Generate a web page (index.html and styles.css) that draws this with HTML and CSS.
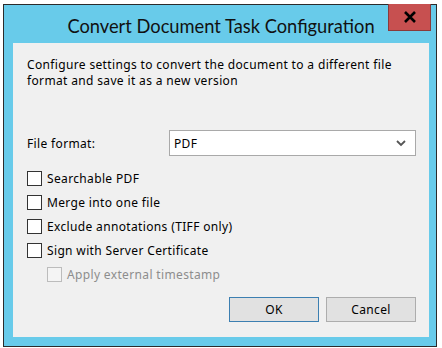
FILE: index.html
```html
<!DOCTYPE html>
<html lang="en">
<head>
  <meta charset="UTF-8" />
  <title>Convert Document Task Configuration</title>
  <link rel="stylesheet" href="styles.css">
</head>
<body>
  <div class="window">
    <div class="titlebar">
      <span class="title">Convert Document Task Configuration</span>
      <button class="close" title="Close">
        <svg width="14" height="12" viewBox="0 0 14 12"><path d="M2 1 L12 11 M12 1 L2 11" stroke="#000" stroke-width="2.6"/></svg>
      </button>
    </div>

    <div class="client">
      <p class="desc">Configure settings to convert the document to a different file<br>format and save it as a new version</p>

      <div class="field">
        <label class="field-label">File format:</label>
        <div class="select">
          <span>PDF</span>
          <svg width="10" height="7" viewBox="0 0 10 7"><path d="M1 1 L5 5 L9 1" fill="none" stroke="#555" stroke-width="1.8"/></svg>
        </div>
      </div>

      <div class="options">
        <label class="check"><input type="checkbox"> Searchable PDF</label>
        <label class="check"><input type="checkbox"> Merge into one file</label>
        <label class="check"><input type="checkbox"> Exclude annotations (TIFF only)</label>
        <label class="check"><input type="checkbox"> Sign with Server Certificate</label>
        <label class="check sub disabled"><input type="checkbox" disabled> Apply external timestamp</label>
      </div>

      <div class="buttons">
        <button class="btn default">OK</button>
        <button class="btn">Cancel</button>
      </div>
    </div>
  </div>
</body>
</html>
```

FILE: styles.css
```css
body {
  margin: 0;
  background: #ffffff;
  font-family: "Noto Sans", "Open Sans", sans-serif;
  font-size: 12px;
  letter-spacing: 0.35px;
  color: #000;
}
.window {
  margin: 4px 0 0 3px;
  border: 1px solid #2b2b2b;
  background: #68cbea;
  display: flex;
  flex-direction: column;
  padding: 0 7px 9px 9px;
  box-sizing: border-box;
  width: 434px;
  height: 343px;
}
.titlebar {
  height: 38px;
  display: flex;
  align-items: center;
  justify-content: center;
  position: relative;
}
.title {
  font-family: Lato, "Noto Sans", sans-serif;
  font-size: 18.3px;
  letter-spacing: 0;
  color: #111;
  margin-top: 4px;
}
.close {
  position: absolute;
  top: -1px;
  right: -2px;
  width: 43px;
  height: 27px;
  background: #c75050;
  border: 1px solid #8a3a3a;
  border-top: none;
  display: flex;
  align-items: center;
  justify-content: center;
  padding: 0;
}
.client {
  flex: 1;
  background: #f0f0f0;
  padding: 14px 13px 0 14px;
}
.desc {
  margin: 0;
  line-height: 16px;
}
.field {
  display: flex;
  align-items: center;
  margin-top: 41px;
}
.field-label {
  width: 142px;
}
.select {
  flex: 1;
  height: 26px;
  box-sizing: border-box;
  border: 1px solid #a9a9a9;
  background: #fff;
  display: flex;
  align-items: center;
  justify-content: space-between;
  padding: 0 9px 0 4px;
}
.options {
  margin-top: 10px;
  display: flex;
  flex-direction: column;
}
.check {
  height: 24px;
  display: flex;
  align-items: center;
  gap: 5px;
}
.check input {
  appearance: none;
  margin: 0;
  width: 15px;
  height: 15px;
  border: 1px solid #333;
  background: #fff;
}
.check.sub {
  padding-left: 20px;
}
.check.disabled {
  color: #8d8d8d;
}
.check.disabled input {
  border-color: #bcbcbc;
  background: #f4f4f4;
}
.buttons {
  display: flex;
  justify-content: flex-end;
  gap: 7px;
  margin-top: 11px;
}
.btn {
  width: 90px;
  height: 25px;
  font-family: inherit;
  font-size: 12px;
  letter-spacing: inherit;
  background: #e1e1e1;
  border: 1px solid #adadad;
  padding: 0;
}
.btn.default {
  border-color: #3c7fb1;
  box-shadow: inset 0 0 0 1px #e1e1e1;
}
```
